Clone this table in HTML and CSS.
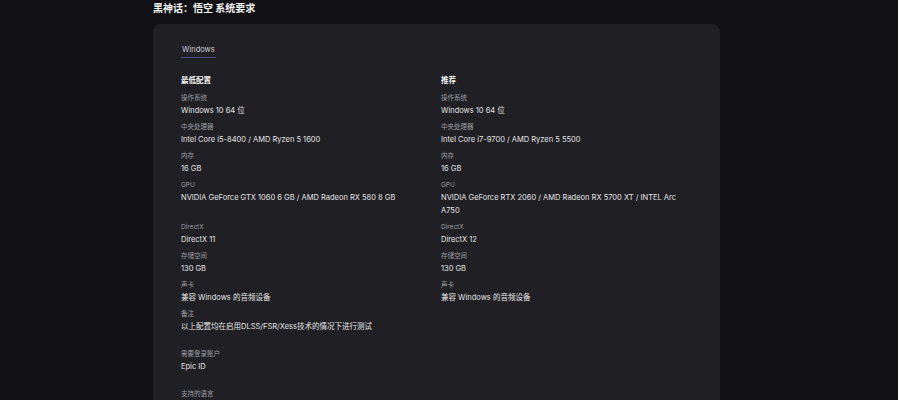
FILE: index.html
```html
<!DOCTYPE html>
<html lang="zh-CN">
<head>
<meta charset="utf-8">
<title>黑神话：悟空 系统要求</title>
<link rel="stylesheet" href="styles.css">
</head>
<body>
<div class="page">
  <h1 class="title">黑神话：悟空 系统要求</h1>
  <section class="card">
    <div class="tabs"><span class="tab">Windows</span></div>
    <div class="specs">
      <h2 class="heading">最低配置</h2>
      <h2 class="heading">推荐</h2>

      <div class="spec"><div class="label">操作系统</div><div class="value">Windows 10 64 位</div></div>
      <div class="spec"><div class="label">操作系统</div><div class="value">Windows 10 64 位</div></div>

      <div class="spec"><div class="label">中央处理器</div><div class="value">Intel Core i5-8400 / AMD Ryzen 5 1600</div></div>
      <div class="spec"><div class="label">中央处理器</div><div class="value">Intel Core i7-9700 / AMD Ryzen 5 5500</div></div>

      <div class="spec"><div class="label">内存</div><div class="value">16 GB</div></div>
      <div class="spec"><div class="label">内存</div><div class="value">16 GB</div></div>

      <div class="spec"><div class="label">GPU</div><div class="value">NVIDIA GeForce GTX 1060 6 GB / AMD Radeon RX 580 8 GB</div></div>
      <div class="spec"><div class="label">GPU</div><div class="value">NVIDIA GeForce RTX 2060 / AMD Radeon RX 5700 XT / INTEL Arc A750</div></div>

      <div class="spec"><div class="label">DirectX</div><div class="value">DirectX 11</div></div>
      <div class="spec"><div class="label">DirectX</div><div class="value">DirectX 12</div></div>

      <div class="spec"><div class="label">存储空间</div><div class="value">130 GB</div></div>
      <div class="spec"><div class="label">存储空间</div><div class="value">130 GB</div></div>

      <div class="spec"><div class="label">声卡</div><div class="value">兼容 Windows 的音频设备</div></div>
      <div class="spec"><div class="label">声卡</div><div class="value">兼容 Windows 的音频设备</div></div>

      <div class="spec"><div class="label">备注</div><div class="value">以上配置均在启用DLSS/FSR/Xess技术的情况下进行测试</div></div>
    </div>
    <div class="extra">
      <div class="label">需要登录账户</div>
      <div class="value">Epic ID</div>
    </div>
    <div class="extra">
      <div class="label">支持的语言</div>
    </div>
  </section>
</div>
</body>
</html>
```
FILE: styles.css
```css
html, body {
  margin: 0;
  padding: 0;
  background: #111115;
  font-family: "Inter", "Noto Sans CJK SC", sans-serif;
  color: #e6e6e8;
}
.page {
  width: 567px;
  margin-left: 153px;
  padding-top: 2px;
}
.title {
  margin: 0;
  font-size: 10px;
  line-height: 13px;
  font-weight: 700;
  color: #f2f2f2;
}
.card {
  margin-top: 9px;
  background: #202024;
  border-radius: 8px;
  padding: 20px 28px 20px;
  min-height: 380px;
}
.tabs {
  display: flex;
}
.tab {
  font-size: 7.5px;
  line-height: 12px;
  color: #cfcfd4;
  padding: 0 1px 1px 1px;
  border-bottom: 1px solid #4b4a86;
}
.specs {
  display: grid;
  grid-template-columns: 260px 250px;
  row-gap: 4px;
  margin-top: 17px;
}
.heading {
  margin: 0 0 1px;
  font-size: 7.5px;
  line-height: 12px;
  font-weight: 700;
  color: #f5f5f5;
}
.label {
  font-size: 6.5px;
  line-height: 12px;
  color: #9c9ca2;
}
.value {
  font-size: 7.5px;
  line-height: 13px;
  color: #e4e4e6;
}
.extra {
  margin-top: 15px;
}
```
